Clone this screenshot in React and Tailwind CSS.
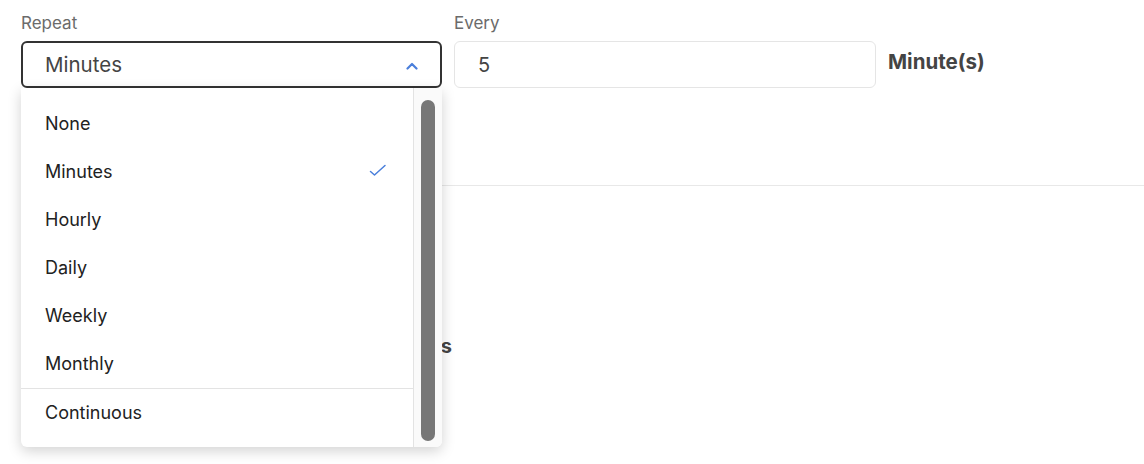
import { useState } from 'react';

const options = ['None', 'Minutes', 'Hourly', 'Daily', 'Weekly', 'Monthly'];

const App = () => {
  const [selected] = useState('Minutes');

  return (
    <div className="relative w-full h-[464px] bg-white overflow-hidden font-['Inter','Liberation_Sans',sans-serif]">
      {/* Top row */}
      <div className="flex items-start gap-[12px] pl-[21px] pt-[13px]">
        <div className="w-[421px]">
          <div className="text-[17px] leading-[20px] text-[#6b6b6b] mb-[8px]">Repeat</div>
          <div className="h-[47px] rounded-[6px] border-2 border-[#333] flex items-center justify-between pl-[22px] pr-[22px] pt-[2px]">
            <span className="text-[20.5px] text-[#444]">{selected}</span>
            <svg width="12" height="8" viewBox="0 0 12 8" fill="none">
              <path d="M1.5 6.5L6 2L10.5 6.5" stroke="#4a7fdb" strokeWidth="2.2" strokeLinecap="round" strokeLinejoin="round" />
            </svg>
          </div>
        </div>
        <div className="w-[422px]">
          <div className="text-[17px] leading-[20px] text-[#6b6b6b] mb-[8px]">Every</div>
          <div className="h-[47px] rounded-[6px] border border-[#e5e5e5] flex items-center pl-[23px]">
            <span className="text-[20px] text-[#444]">5</span>
          </div>
        </div>
        <div className="pt-[34px] text-[20.5px] font-bold text-[#444]">Minute(s)</div>
      </div>

      <div className="ml-[21px] mt-[97px] border-t border-[#e8e8e8]" />

      <div className="w-[452px] text-right mt-[145px] text-[20px] font-bold text-[#444]">Notify on Failures</div>

      {/* Dropdown menu */}
      <div className="absolute left-[21px] top-[88px] w-[421px] h-[359px] bg-white rounded-b-[6px] shadow-[0_4px_14px_rgba(0,0,0,0.18)] flex overflow-hidden">
        <div className="flex-1 pt-[11px]">
          {options.map((opt) => (
            <div key={opt} className="h-[48px] flex items-center justify-between pl-[24px] pr-[26px] text-[18px] text-[#222]">
              <span>{opt}</span>
              {opt === selected && (
                <svg width="18" height="14" viewBox="0 0 18 14" fill="none">
                  <path d="M1.5 7.5L5.5 11L16 1.5" stroke="#4a7fdb" strokeWidth="1.5" strokeLinecap="round" strokeLinejoin="round" />
                </svg>
              )}
            </div>
          ))}
          <div className="mt-[1px] border-t border-[#e3e3e3] h-[48px] flex items-center pl-[24px] text-[18px] text-[#222]">
            Continuous
          </div>
        </div>
        <div className="w-[29px] border-l border-[#e3e3e3] bg-[#fafafa] flex justify-center pt-[12px]">
          <div className="w-[14px] h-[341px] rounded-full bg-[#777]" />
        </div>
      </div>
    </div>
  );
};

export default App;
